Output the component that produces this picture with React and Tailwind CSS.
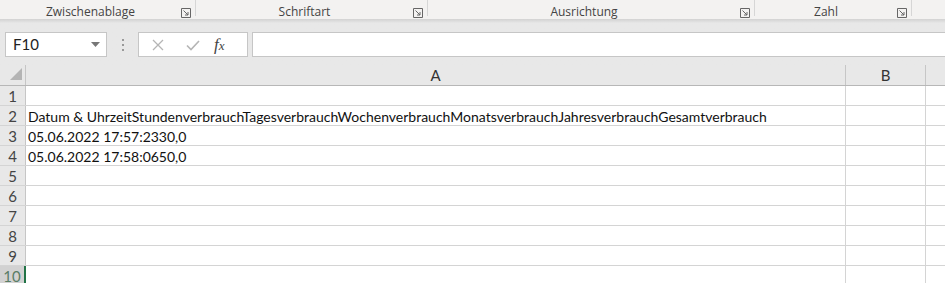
const groups = [
  { label: 'Zwischenablage', width: 'w-[196px]' },
  { label: 'Schriftart', width: 'w-[232px]' },
  { label: 'Ausrichtung', width: 'w-[327px]' },
  { label: 'Zahl', width: 'w-[157px]' },
]

const rows = [
  { n: 1, text: '' },
  { n: 2, text: 'Datum & UhrzeitStundenverbrauchTagesverbrauchWochenverbrauchMonatsverbrauchJahresverbrauchGesamtverbrauch' },
  { n: 3, text: '05.06.2022 17:57:2330,0' },
  { n: 4, text: '05.06.2022 17:58:0650,0' },
  { n: 5, text: '' },
  { n: 6, text: '' },
  { n: 7, text: '' },
  { n: 8, text: '' },
  { n: 9, text: '' },
  { n: 10, text: '', active: true },
]

function Launcher() {
  return (
    <svg width="10" height="10" viewBox="0 0 10 10" className="shrink-0">
      <path d="M0.5 0.5H9.5V9.5H0.5Z" fill="none" stroke="#666" strokeWidth="1" />
      <path d="M2.5 2.5L7 7M7 4V7H4" fill="none" stroke="#666" strokeWidth="1" />
    </svg>
  )
}

function Ribbon() {
  return (
    <div className="h-[19px] bg-[#f3f2f1] flex text-[12px] text-[#444] font-['Open_Sans',sans-serif]">
      {groups.map((g) => (
        <div key={g.label} className={`${g.width} flex items-start pt-[5px] pr-[3px] border-r border-[#d6d6d6] mb-[3px]`}>
          <span className="flex-1 text-center leading-[14px]">{g.label}</span>
          <div className="pt-[3px] pr-[1px]">
            <Launcher />
          </div>
        </div>
      ))}
      <div className="flex-1" />
    </div>
  )
}

function FormulaBar() {
  return (
    <div className="h-[46px] flex items-start pt-[13px] pl-[5px] bg-gradient-to-b from-[#d2d2d2] via-[#e8e8e8] via-[9%] to-[#e8e8e8]">
      <div className="w-[102px] h-[25px] bg-white border border-[#c6c6c6] flex items-center pl-[7px] pr-[6px] text-[15px] text-[#222] font-['Lato',sans-serif]">
        <span className="flex-1">F10</span>
        <svg width="9" height="5" viewBox="0 0 9 5">
          <path d="M0 0H9L4.5 5Z" fill="#777" />
        </svg>
      </div>
      <div className="w-[31px] h-[25px] flex flex-col items-center justify-center gap-[3px]">
        <span className="w-[2px] h-[2px] bg-[#999]" />
        <span className="w-[2px] h-[2px] bg-[#999]" />
        <span className="w-[2px] h-[2px] bg-[#999]" />
      </div>
      <div className="w-[110px] h-[25px] bg-white border border-[#c6c6c6] flex items-center">
        <svg width="40" height="12" viewBox="0 0 40 12">
          <path d="M14 1L24 11M24 1L14 11" stroke="#b5b5b5" strokeWidth="1.3" fill="none" />
        </svg>
        <svg width="30" height="12" viewBox="0 0 30 12">
          <path d="M8 6.5L12 10.5L20 2" stroke="#b5b5b5" strokeWidth="1.6" fill="none" />
        </svg>
        <span className="ml-[5px] text-[17px] text-[#444] italic font-['Liberation_Serif',serif] leading-none">
          f<span className="text-[13px]">x</span>
        </span>
      </div>
      <div className="ml-[4px] flex-1 h-[25px] bg-white border border-[#c6c6c6] border-r-0" />
    </div>
  )
}

function Grid() {
  return (
    <div className="font-['Lato',sans-serif] text-[14px]">
      <div className="h-[21px] flex bg-[#e8e8e8] border-b border-[#b7b7b7] text-[#333] text-[15px]">
        <div className="w-[26px] h-full border-r border-[#c6c6c6] flex items-end justify-end pr-[3px] pb-[5px]">
          <svg width="12" height="12" viewBox="0 0 12 12">
            <path d="M12 0V12H0Z" fill="#b4b4b4" />
          </svg>
        </div>
        <div className="w-[820px] h-full border-r border-[#c6c6c6] flex items-center justify-center pt-[1px]">A</div>
        <div className="w-[80px] h-full border-r border-[#c6c6c6] flex items-center justify-center pt-[1px]">B</div>
        <div className="flex-1" />
      </div>
      {rows.map((r) => (
        <div key={r.n} className="h-[20px] flex border-b border-[#d4d4d4]">
          <div
            className={`w-[26px] h-full flex items-center justify-center pt-[2px] text-[15px] border-r ${
              r.active ? 'bg-[#d2d2d2] text-[#5a7d66] border-r-[#217346] border-r-2' : 'bg-[#e8e8e8] text-[#444] border-[#c6c6c6]'
            }`}
          >
            {r.n}
          </div>
          <div className="w-[820px] h-full border-r border-[#d4d4d4] flex items-center pt-[2px] pl-[2px] text-[#111] whitespace-nowrap">
            {r.text}
          </div>
          <div className="w-[80px] h-full border-r border-[#d4d4d4]" />
          <div className="flex-1" />
        </div>
      ))}
    </div>
  )
}

export default function App() {
  return (
    <div className="w-[945px] h-[283px] overflow-hidden bg-white">
      <Ribbon />
      <FormulaBar />
      <Grid />
    </div>
  )
}
